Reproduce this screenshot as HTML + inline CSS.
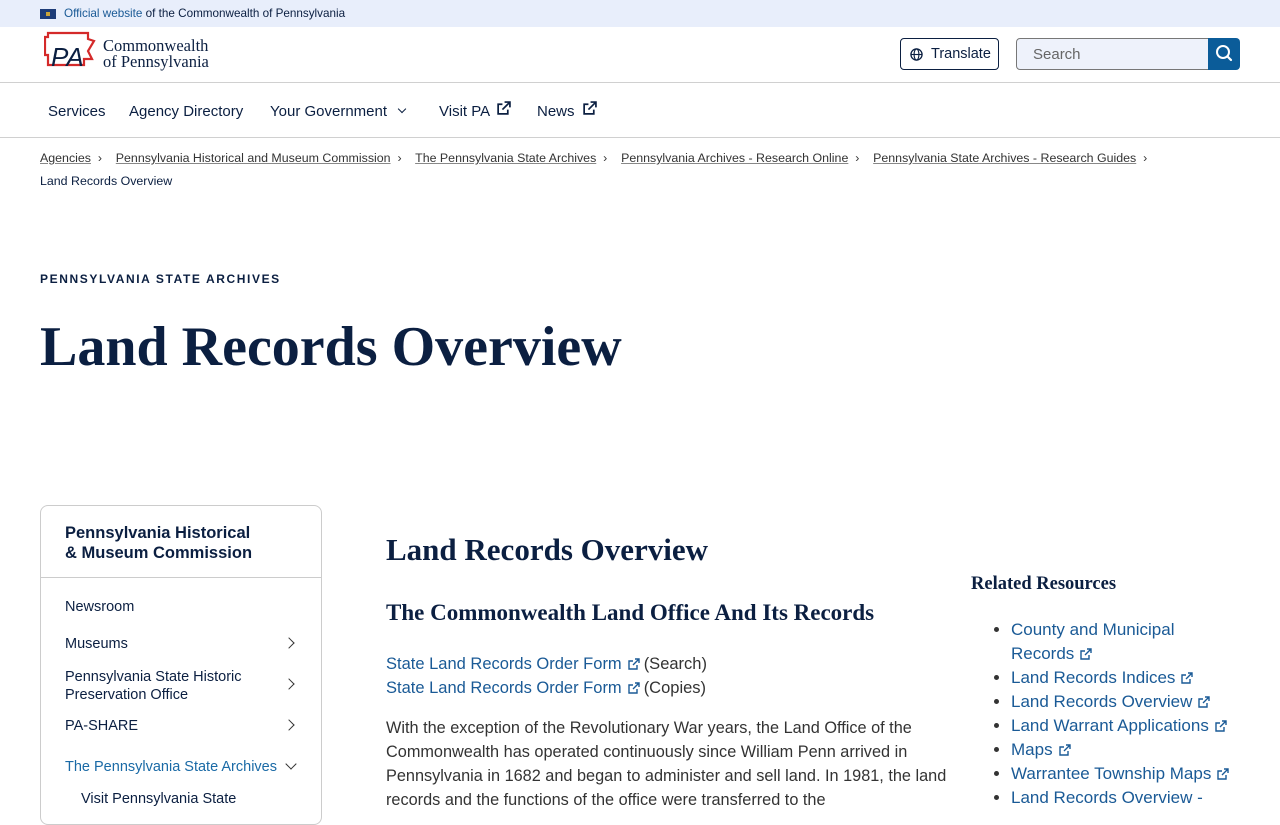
<!DOCTYPE html>
<html><head><meta charset="utf-8"><style>
*{box-sizing:border-box;margin:0;padding:0}
body{width:1280px;height:800px;overflow:hidden;font-family:"Liberation Sans",sans-serif;color:#0b1f41;background:#fff;position:relative}
a{color:#1a5a96}
.abs{position:absolute}
.top{position:absolute;left:0;top:0;width:1280px;height:27px;background:#e8eefb;font-size:11.7px;color:#0b1f41}
.hdr{position:absolute;top:27px;left:0;width:1280px;height:56px;border-bottom:1px solid #d0d0d0}
.nav{position:absolute;top:83px;left:0;width:1280px;height:55px;border-bottom:1px solid #d0d0d0;font-size:15px}
.nav span{position:absolute;top:20px}
.bc{font-size:12.4px;color:#333}
.bc a{color:#333;text-decoration:underline;text-decoration-color:#888}
.serif{font-family:"Liberation Serif","DejaVu Serif",serif;font-weight:bold}
.side{position:absolute;left:40px;top:505px;width:282px;height:320px;border:1px solid #ccc;border-radius:8px}
.side .it{position:absolute;left:24px;font-size:14.5px;color:#0b1f41}
.chev{position:absolute;left:244px;width:8px;height:8px;border-right:1.6px solid #333;border-top:1.6px solid #333;transform:rotate(45deg)}
.p{font-size:16.5px;color:#333;line-height:24px}
.ext{display:inline-block;width:12px;height:12px;margin:0 4px 0 6px;vertical-align:-1px}
ul{list-style:disc}
li{font-size:17px;line-height:24px;color:#333}
</style></head><body>
<div class="top">
 <div class="abs" style="left:40px;top:9px;width:16px;height:10px;background:#1d3c78"><div style="margin:3px 6px;width:4px;height:4px;background:#c9a43a"></div></div>
 <div class="abs" style="left:64px;top:7px"><a style="color:#1a5a96">Official website</a> of the Commonwealth of Pennsylvania</div>
</div>
<div class="hdr">
 <svg class="abs" style="left:44px;top:4px" width="52" height="40" viewBox="0 0 52 40"><path d="M4 2 H44 V8 L50 10 L44 20 L48 28 H40 L40 34 H4 V24 H1 V6 H4Z" fill="none" stroke="#d42a2a" stroke-width="2.2"/><text x="7" y="35" font-family="Liberation Sans" font-style="italic" font-size="26" fill="#0b1f41">PA</text></svg>
 <div class="abs serif" style="left:103px;top:11px;font-size:16.5px;font-weight:normal;line-height:16px;color:#0b1f41">Commonwealth<br>of Pennsylvania</div>
 <div class="abs" style="left:900px;top:11px;width:99px;height:32px;border:1px solid #0b1f41;border-radius:4px;font-size:14.5px;padding:7px 0 0 30px">Translate
  <svg class="abs" style="left:9px;top:9px" width="13" height="13" viewBox="0 0 14 14"><circle cx="7" cy="7" r="6" fill="none" stroke="#0b1f41" stroke-width="1.4"/><ellipse cx="7" cy="7" rx="2.6" ry="6" fill="none" stroke="#0b1f41" stroke-width="1.2"/><line x1="1" y1="7" x2="13" y2="7" stroke="#0b1f41" stroke-width="1.2"/></svg></div>
 <div class="abs" style="left:1016px;top:11px;width:194px;height:32px;border:1px solid #777;border-radius:4px 0 0 4px;background:#eef2fb;font-size:15px;color:#666;padding:7px 0 0 16px">Search</div>
 <div class="abs" style="left:1208px;top:11px;width:32px;height:32px;background:#0b5c99;border-radius:0 4px 4px 0">
  <svg width="32" height="32" viewBox="0 0 32 32"><circle cx="15" cy="14" r="6" fill="none" stroke="#fff" stroke-width="2"/><line x1="19.5" y1="18.5" x2="23" y2="22" stroke="#fff" stroke-width="2.2" stroke-linecap="round"/></svg></div>
</div>
<div class="nav">
 <span style="left:48px">Services</span><span style="left:129px">Agency Directory</span><span style="left:270px">Your Government</span>
 <div class="abs" style="left:399px;top:23px;width:6px;height:6px;border-right:1.6px solid #0b1f41;border-bottom:1.6px solid #0b1f41;transform:rotate(45deg)"></div>
 <span style="left:439px">Visit PA</span>
 <svg class="abs" style="left:496px;top:18px" width="15" height="15" viewBox="0 0 14 14"><path d="M11 8v4H2V3h4M8 1h5v5M13 1L6 8" fill="none" stroke="#0b1f41" stroke-width="1.6"/></svg>
 <span style="left:537px">News</span>
 <svg class="abs" style="left:582px;top:18px" width="15" height="15" viewBox="0 0 14 14"><path d="M11 8v4H2V3h4M8 1h5v5M13 1L6 8" fill="none" stroke="#0b1f41" stroke-width="1.6"/></svg>
</div>
<div class="abs bc" style="left:40px;top:151px;white-space:nowrap"><a>Agencies</a> &nbsp;›&nbsp;&nbsp;&nbsp; <a>Pennsylvania Historical and Museum Commission</a> &nbsp;›&nbsp;&nbsp;&nbsp; <a>The Pennsylvania State Archives</a> &nbsp;›&nbsp;&nbsp;&nbsp; <a>Pennsylvania Archives - Research Online</a> &nbsp;›&nbsp;&nbsp;&nbsp; <a>Pennsylvania State Archives - Research Guides</a> &nbsp;›</div>
<div class="abs bc" style="left:40px;top:174px;color:#0b1f41">Land Records Overview</div>
<div class="abs" style="left:40px;top:272px;font-size:12px;font-weight:bold;letter-spacing:1.6px">PENNSYLVANIA STATE ARCHIVES</div>
<div class="abs serif" style="left:40px;top:314px;font-size:56px;line-height:66px">Land Records Overview</div>
<div class="side">
 <div class="abs" style="left:24px;top:17px;font-size:16.5px;font-weight:bold;line-height:20px">Pennsylvania Historical<br>&amp; Museum Commission</div>
 <div class="abs" style="left:0;top:71px;width:280px;border-top:1px solid #ccc"></div>
 <div class="it" style="top:93px">Newsroom</div>
 <div class="it" style="top:130px">Museums</div><div class="chev" style="top:133px"></div>
 <div class="it" style="top:162px;line-height:18px">Pennsylvania State Historic<br>Preservation Office</div><div class="chev" style="top:174px"></div>
 <div class="it" style="top:212px">PA-SHARE</div><div class="chev" style="top:215px"></div>
 <div class="it" style="top:253px;color:#1a6aa6">The Pennsylvania State Archives</div>
 <div class="abs" style="left:246px;top:254px;width:8px;height:8px;border-right:1.6px solid #333;border-bottom:1.6px solid #333;transform:rotate(45deg)"></div>
 <div class="it" style="top:285px;left:40px">Visit Pennsylvania State</div>
</div>
<div class="abs serif" style="left:386px;top:532px;font-size:31px">Land Records Overview</div>
<div class="abs serif" style="left:386px;top:600px;font-size:23px">The Commonwealth Land Office And Its Records</div>
<div class="abs p" style="left:386px;top:652px;width:560px;font-size:16.5px">
 <a>State Land Records Order Form</a><svg class="ext" viewBox="0 0 12 12"><path d="M9 7v4H1V3h4M7 1h4v4M11 1L5 7" fill="none" stroke="#1a5a96" stroke-width="1.4"/></svg>(Search)<br>
 <a>State Land Records Order Form</a><svg class="ext" viewBox="0 0 12 12"><path d="M9 7v4H1V3h4M7 1h4v4M11 1L5 7" fill="none" stroke="#1a5a96" stroke-width="1.4"/></svg>(Copies)
</div>
<div class="abs p" style="left:386px;top:716px;width:563px;font-size:16.3px">With the exception of the Revolutionary War years, the Land Office of the Commonwealth has operated continuously since William Penn arrived in Pennsylvania in 1682 and began to administer and sell land. In 1981, the land records and the functions of the office were transferred to the</div>
<div class="abs serif" style="left:971px;top:574px;font-size:18.5px">Related Resources</div>
<ul class="abs" style="left:1011px;top:618px;width:225px;font-size:17px">
 <li><a>County and Municipal<br>Records</a><svg class="ext" viewBox="0 0 12 12"><path d="M9 7v4H1V3h4M7 1h4v4M11 1L5 7" fill="none" stroke="#1a5a96" stroke-width="1.4"/></svg></li>
 <li><a>Land Records Indices</a><svg class="ext" viewBox="0 0 12 12"><path d="M9 7v4H1V3h4M7 1h4v4M11 1L5 7" fill="none" stroke="#1a5a96" stroke-width="1.4"/></svg></li>
 <li><a>Land Records Overview</a><svg class="ext" viewBox="0 0 12 12"><path d="M9 7v4H1V3h4M7 1h4v4M11 1L5 7" fill="none" stroke="#1a5a96" stroke-width="1.4"/></svg></li>
 <li><a>Land Warrant Applications</a><svg class="ext" viewBox="0 0 12 12"><path d="M9 7v4H1V3h4M7 1h4v4M11 1L5 7" fill="none" stroke="#1a5a96" stroke-width="1.4"/></svg></li>
 <li><a>Maps</a><svg class="ext" viewBox="0 0 12 12"><path d="M9 7v4H1V3h4M7 1h4v4M11 1L5 7" fill="none" stroke="#1a5a96" stroke-width="1.4"/></svg></li>
 <li><a>Warrantee Township Maps</a><svg class="ext" viewBox="0 0 12 12"><path d="M9 7v4H1V3h4M7 1h4v4M11 1L5 7" fill="none" stroke="#1a5a96" stroke-width="1.4"/></svg></li>
 <li><a>Land Records Overview -</a></li>
</ul>
</body></html>
